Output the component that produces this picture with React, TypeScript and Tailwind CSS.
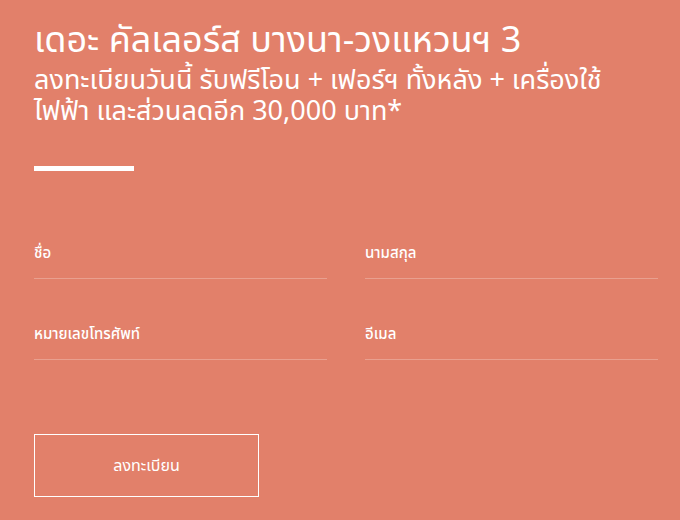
export default function App() {
  const fields = ["ชื่อ", "นามสกุล", "หมายเลขโทรศัพท์", "อีเมล"]
  return (
    <div
      className="w-[680px] h-[520px] bg-[#e2806a] text-white px-[34px] pt-[20px] overflow-hidden"
      style={{ fontFamily: '"Noto Sans Thai", "Noto Sans", "Liberation Sans", sans-serif' }}
    >
      <h1 className="text-[36px] leading-[42px] font-normal">เดอะ คัลเลอร์ส บางนา-วงแหวนฯ 3</h1>
      <h2 className="text-[27px] leading-[31px] font-normal mt-[3px]">
        ลงทะเบียนวันนี้ รับฟรีโอน + เฟอร์ฯ ทั้งหลัง + เครื่องใช้
        <br />
        ไฟฟ้า และส่วนลดอีก 30,000 บาท*
      </h2>
      <div className="w-[100px] h-[5px] bg-white mt-[39px]" />
      <div className="grid grid-cols-2 gap-x-[38px] gap-y-[44px] mt-[71px] w-[624px]">
        {fields.map((f) => (
          <div key={f} className="border-b border-white/25 pb-[12px]">
            <div className="text-[15px] leading-[24px] font-medium">{f}</div>
          </div>
        ))}
      </div>
      <button className="mt-[74px] w-[225px] h-[63px] border border-white text-[16px] text-white">
        ลงทะเบียน
      </button>
    </div>
  )
}
